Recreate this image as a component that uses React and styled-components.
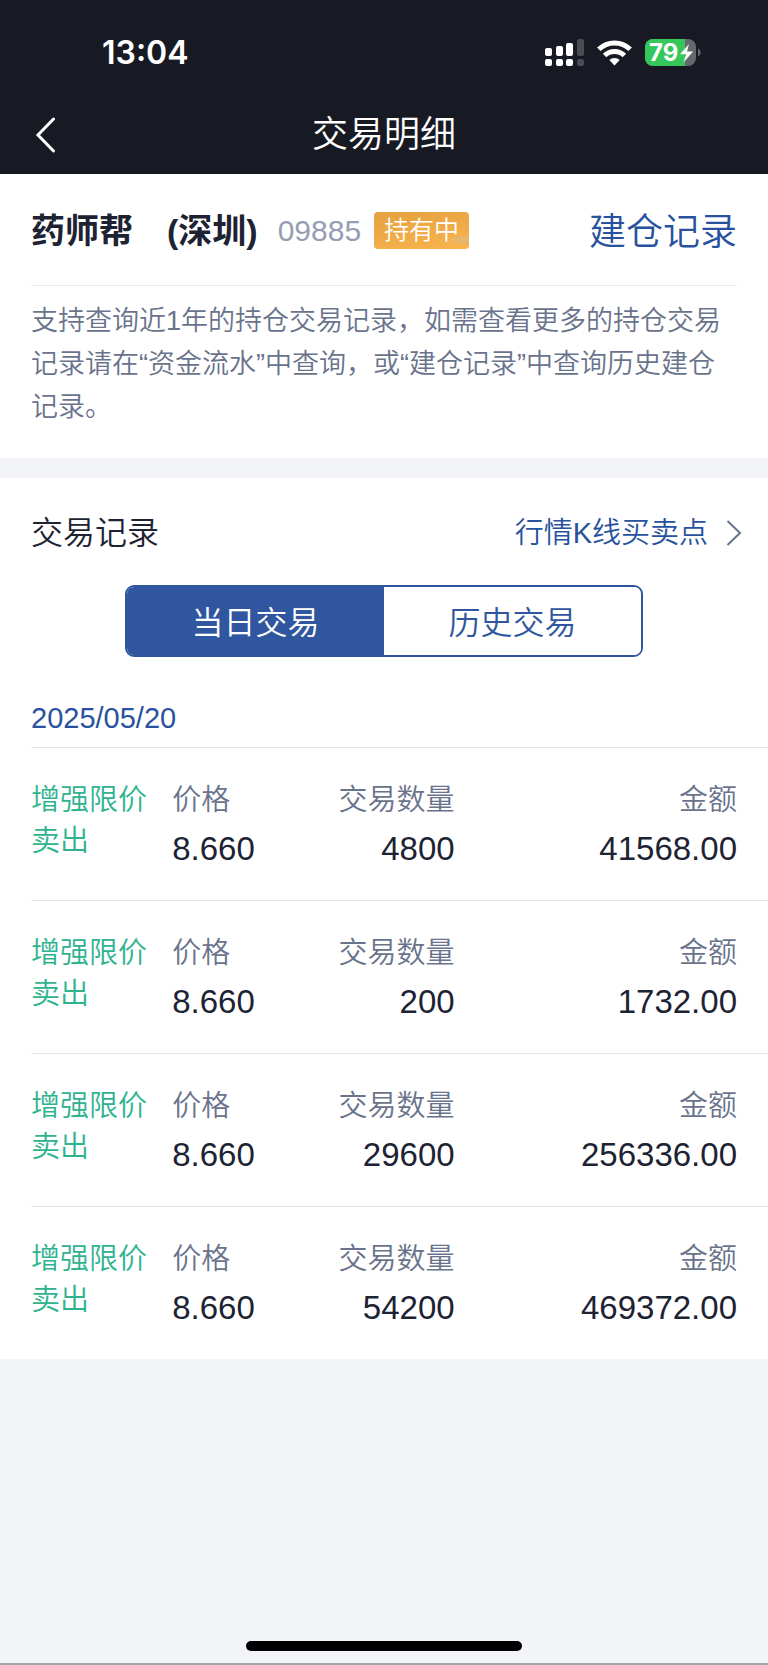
import React, { useState } from "react";
import styled, { createGlobalStyle } from "styled-components";

const GlobalStyle = createGlobalStyle`
  * {
    box-sizing: border-box;
  }

  body {
    margin: 0;
    background-color: #f3f4f7;
    font-family: "Liberation Sans", "Noto Sans CJK SC", sans-serif;
    font-weight: 350;
    color: #1d2333;
  }

  h1, h2, p, ul, dl, dd {
    margin: 0;
    padding: 0;
    font-weight: 350;
  }

  button {
    font-family: inherit;
    font-weight: inherit;
    cursor: pointer;
  }

  a {
    color: #28529d;
    text-decoration: none;
  }
`;

const Page = styled.div`
  display: flex;
  flex-direction: column;
  min-height: 100vh;
  border-bottom: 2px solid #a3a4a8;
`;

const Header = styled.header`
  background-color: #171a23;
  color: #fff;
`;

const StatusBar = styled.div`
  display: flex;
  align-items: center;
  justify-content: space-between;
  height: 94px;
  padding: 11px 67px 0 102px;
`;

const Time = styled.time`
  font-family: Inter, sans-serif;
  font-size: 32px;
  font-weight: 600;
  line-height: 40px;
`;

const StatusIcons = styled.div`
  display: flex;
  align-items: center;
  gap: 13px;
`;

const BatteryText = styled.text`
  font-family: Inter, sans-serif;
  font-size: 24px;
  font-weight: 700;
`;

const NavBar = styled.div`
  display: grid;
  grid-template-columns: 1fr auto 1fr;
  align-items: center;
  height: 80px;
  padding: 2px 31px 0;
`;

const BackButton = styled.button`
  display: flex;
  justify-self: start;
  padding: 4px;
  border: 0;
  background: none;
  color: #fff;
`;

const Title = styled.h1`
  font-size: 36px;
  line-height: 48px;
`;

const Panel = styled.section`
  background-color: #fff;
`;

const StockPanel = styled(Panel)`
  padding: 0 31px 29px;
  margin-bottom: 20px;
`;

const StockRow = styled.div`
  display: flex;
  align-items: center;
  height: 112px;
  padding-top: 2px;
  border-bottom: 1px solid #e6e8ed;
`;

const StockName = styled.h2`
  font-size: 34px;
  font-weight: 700;
  line-height: 48px;
`;

const StockCode = styled.span`
  margin-left: 20px;
  font-size: 30px;
  line-height: 48px;
  color: #959db3;
`;

const Badge = styled.span`
  margin-left: 13px;
  padding: 0 10px;
  border-radius: 4px;
  background:
    radial-gradient(ellipse 12px 4px at 88px 28px, #e9b568 90%, transparent),
    linear-gradient(170deg, #e5a13f, #f9b44e);
  font-size: 25px;
  line-height: 37px;
  color: #fff;
`;

const RecordLink = styled.a`
  margin-left: auto;
  padding-top: 4px;
  font-size: 37px;
  line-height: 48px;
`;

const Notice = styled.p`
  padding-top: 14px;
  font-size: 27px;
  line-height: 43px;
  color: #69738c;
`;

const SectionHead = styled.div`
  display: flex;
  align-items: center;
  justify-content: space-between;
  height: 107px;
  padding: 3px 26px 0 31px;
`;

const SectionTitle = styled.h2`
  font-size: 32px;
  line-height: 44px;
`;

const ChartLink = styled.a`
  display: flex;
  align-items: center;
  gap: 18px;
  font-size: 29px;
  line-height: 44px;
`;

const Tabs = styled.div`
  display: flex;
  margin: 0 125px;
  border: 2px solid #2f569f;
  border-radius: 9px;
  overflow: hidden;
`;

const Tab = styled.button`
  flex: 1;
  height: 68px;
  padding: 0 0 2px;
  border: 0;
  background-color: ${(props) => (props.$active ? "#2f569f" : "#fff")};
  color: ${(props) => (props.$active ? "#fff" : "#2f569f")};
  font-size: 32px;
`;

const Day = styled.div`
  margin-left: 31px;
`;

const DayTitle = styled.div`
  padding: 39px 0 7px;
  border-bottom: 1px solid #e4e6ed;
  font-size: 29px;
  line-height: 44px;
  color: #28529d;
`;

const TradeList = styled.ul`
  list-style: none;
`;

const TradeItem = styled.li`
  display: grid;
  grid-template-columns: 1fr 1fr 1fr 2fr;
  padding: 32px 31px 31px 0;
  line-height: 41px;

  & + & {
    border-top: 1px solid #e4e6ed;
  }
`;

const TradeType = styled.div`
  width: 120px;
  font-size: 29px;
  color: #2fb38f;
`;

const Field = styled.dl`
  text-align: ${(props) => props.$align || "right"};
  white-space: nowrap;
`;

const FieldLabel = styled.dt`
  font-size: 29px;
  color: #69738c;
`;

const FieldValue = styled.dd`
  padding-top: 7px;
  font-size: 33px;
`;

const HomeIndicator = styled.div`
  width: 36%;
  height: 10px;
  margin: auto auto 12px;
  border-radius: 5px;
  background-color: #000;
`;

const trades = [
  { type: "增强限价卖出", price: "8.660", quantity: "4800", amount: "41568.00" },
  { type: "增强限价卖出", price: "8.660", quantity: "200", amount: "1732.00" },
  { type: "增强限价卖出", price: "8.660", quantity: "29600", amount: "256336.00" },
  { type: "增强限价卖出", price: "8.660", quantity: "54200", amount: "469372.00" },
];

const SignalIcon = () => (
  <svg width="39" height="28" viewBox="0 0 39 28" fill="#fff">
    <rect x="0" y="9" width="7" height="8" rx="2" />
    <rect x="11" y="7" width="7" height="10" rx="2" />
    <rect x="21" y="4" width="7" height="13" rx="2" />
    <rect x="32" y="0" width="7" height="17" rx="2" fill="#4a4c54" />
    <rect x="0" y="20" width="7" height="7" rx="2" />
    <rect x="11" y="20" width="7" height="7" rx="2" />
    <rect x="21" y="20" width="7" height="7" rx="2" />
    <rect x="32" y="20" width="7" height="7" rx="2" fill="#4a4c54" />
  </svg>
);

const WifiIcon = () => (
  <svg width="35" height="26" viewBox="0 0 35 26" fill="none" stroke="#fff" strokeWidth="5">
    <path d="M1.8 9.3a22.5 22.5 0 0 1 31.4 0" />
    <path d="M7.6 15.5a14.2 14.2 0 0 1 19.8 0" />
    <path d="M17.5 25.4l-5.2-5.3a7.5 7.5 0 0 1 10.4 0z" fill="#fff" stroke="none" />
  </svg>
);

const BatteryIcon = () => (
  <svg width="56" height="28" viewBox="0 0 56 28">
    <defs>
      <clipPath id="battery">
        <rect width="51" height="27" rx="8" />
      </clipPath>
    </defs>
    <g clipPath="url(#battery)">
      <rect width="51" height="27" fill="#66686e" />
      <rect width="40" height="27" fill="#35c759" />
    </g>
    <path d="M53 9.5c3.5 1.5 3.5 6.5 0 8z" fill="#66686e" />
    <BatteryText x="4" y="22" fill="#fff">79</BatteryText>
    <path d="M44 5L35 15.2h6L38.5 23.5L48 12.6h-6z" fill="#fff" />
  </svg>
);

const BackIcon = () => (
  <svg width="22" height="36" viewBox="0 0 22 36" fill="none" stroke="#fff" strokeWidth="3" strokeLinecap="round">
    <path d="M18.5 2L3 18L18.5 34" />
  </svg>
);

const ArrowIcon = () => (
  <svg width="16" height="28" viewBox="0 0 16 28" fill="none" stroke="#69738c" strokeWidth="2">
    <path d="M1.5 2L14 14L1.5 26" />
  </svg>
);

const App = () => {
  const [tab, setTab] = useState("today");

  return (
    <Page lang="zh-CN">
      <GlobalStyle />
      <Header>
        <StatusBar>
          <Time>13:04</Time>
          <StatusIcons>
            <SignalIcon />
            <WifiIcon />
            <BatteryIcon />
          </StatusIcons>
        </StatusBar>
        <NavBar>
          <BackButton aria-label="返回">
            <BackIcon />
          </BackButton>
          <Title>交易明细</Title>
        </NavBar>
      </Header>

      <StockPanel>
        <StockRow>
          <StockName>药师帮　(深圳)</StockName>
          <StockCode>09885</StockCode>
          <Badge>持有中</Badge>
          <RecordLink href="#records">建仓记录</RecordLink>
        </StockRow>
        <Notice>
          支持查询近1年的持仓交易记录，如需查看更多的持仓交易记录请在“资金流水”中查询，或“建仓记录”中查询历史建仓记录。
        </Notice>
      </StockPanel>

      <Panel>
        <SectionHead>
          <SectionTitle>交易记录</SectionTitle>
          <ChartLink href="#chart">
            行情K线买卖点
            <ArrowIcon />
          </ChartLink>
        </SectionHead>
        <Tabs>
          <Tab $active={tab === "today"} aria-pressed={tab === "today"} onClick={() => setTab("today")}>
            当日交易
          </Tab>
          <Tab $active={tab === "history"} aria-pressed={tab === "history"} onClick={() => setTab("history")}>
            历史交易
          </Tab>
        </Tabs>
        <Day>
          <DayTitle>2025/05/20</DayTitle>
          <TradeList>
            {trades.map((trade, index) => (
              <TradeItem key={index}>
                <TradeType>{trade.type}</TradeType>
                <Field $align="left">
                  <FieldLabel>价格</FieldLabel>
                  <FieldValue>{trade.price}</FieldValue>
                </Field>
                <Field>
                  <FieldLabel>交易数量</FieldLabel>
                  <FieldValue>{trade.quantity}</FieldValue>
                </Field>
                <Field>
                  <FieldLabel>金额</FieldLabel>
                  <FieldValue>{trade.amount}</FieldValue>
                </Field>
              </TradeItem>
            ))}
          </TradeList>
        </Day>
      </Panel>

      <HomeIndicator />
    </Page>
  );
};

export default App;
